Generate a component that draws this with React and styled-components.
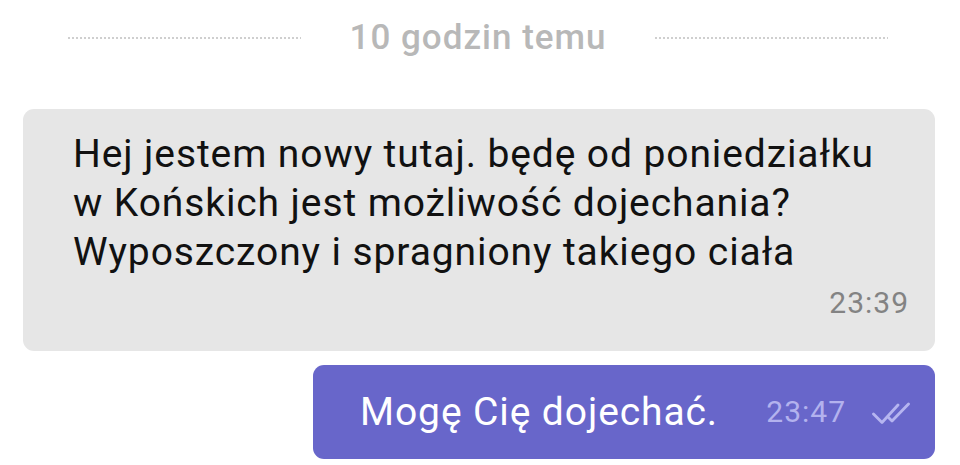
import styled, { createGlobalStyle } from 'styled-components'

const GlobalStyle = createGlobalStyle`
  html, body {
    margin: 0;
    padding: 0;
    background: #ffffff;
  }
  body {
    font-family: Roboto, "Noto Sans", sans-serif;
  }
`

const Chat = styled.div`
  width: 960px;
  height: 465px;
  overflow: hidden;
  box-sizing: border-box;
  padding: 14px 25px 0 23px;
  display: flex;
  flex-direction: column;
  gap: 14px;
`

const DateDivider = styled.div`
  display: flex;
  align-items: center;
  gap: 49px;
  padding: 0 47px 0 45px;
  height: 46px;
  margin-bottom: 35px;
`

const DottedLine = styled.div`
  flex: 1;
  height: 2px;
  margin-top: 2px;
  background-image: repeating-linear-gradient(
    to right,
    #cfcfcf 0,
    #cfcfcf 2px,
    transparent 2px,
    transparent 4px
  );
`

const DateLabel = styled.span`
  font-size: 35px;
  font-weight: 500;
  letter-spacing: 1px;
  color: #b8b8b8;
  line-height: 1;
`

const IncomingBubble = styled.div`
  align-self: stretch;
  background: #e6e6e6;
  border-radius: 11px;
  padding: 21px 26px 31px 50px;
  display: flex;
  flex-direction: column;
`

const MessageText = styled.div`
  font-size: 39px;
  line-height: 49px;
  letter-spacing: 0.9px;
  color: ${p => (p.$out ? '#ffffff' : '#111111')};
`

const Time = styled.span`
  font-size: 30px;
  line-height: 34px;
  letter-spacing: 1px;
  color: ${p => (p.$out ? '#b3b2ee' : '#838383')};
`

const IncomingTime = styled(Time)`
  align-self: flex-end;
  margin-top: 9px;
`

const OutgoingBubble = styled.div`
  align-self: flex-end;
  width: 622px;
  height: 94px;
  box-sizing: border-box;
  background: #6866ca;
  border-radius: 11px;
  padding: 0 25px 0 47px;
  display: flex;
  align-items: center;
`

const OutgoingTime = styled(Time)`
  margin-left: auto;
`

const Ticks = styled.svg`
  margin-left: 26px;
  margin-top: 2px;
  flex-shrink: 0;
`

function DoubleCheck() {
  return (
    <Ticks width="38" height="22" viewBox="0 0 38 22" fill="none">
      <path
        d="M1.5 12 L10 20.5 L26 3"
        stroke="#b6b5f0"
        strokeWidth="2.8"
        strokeLinecap="round"
        strokeLinejoin="round"
      />
      <path
        d="M16 15 L20 19 L36.5 2"
        stroke="#b6b5f0"
        strokeWidth="2.8"
        strokeLinecap="round"
        strokeLinejoin="round"
      />
    </Ticks>
  )
}

export default function App() {
  return (
    <>
      <GlobalStyle />
      <Chat>
        <DateDivider>
          <DottedLine />
          <DateLabel>10 godzin temu</DateLabel>
          <DottedLine />
        </DateDivider>

        <IncomingBubble>
          <MessageText>
            Hej jestem nowy tutaj. będę od poniedziałku
            <br />
            w Końskich jest możliwość dojechania?
            <br />
            Wyposzczony i spragniony takiego ciała
          </MessageText>
          <IncomingTime>23:39</IncomingTime>
        </IncomingBubble>

        <OutgoingBubble>
          <MessageText $out>Mogę Cię dojechać.</MessageText>
          <OutgoingTime $out>23:47</OutgoingTime>
          <DoubleCheck />
        </OutgoingBubble>
      </Chat>
    </>
  )
}
